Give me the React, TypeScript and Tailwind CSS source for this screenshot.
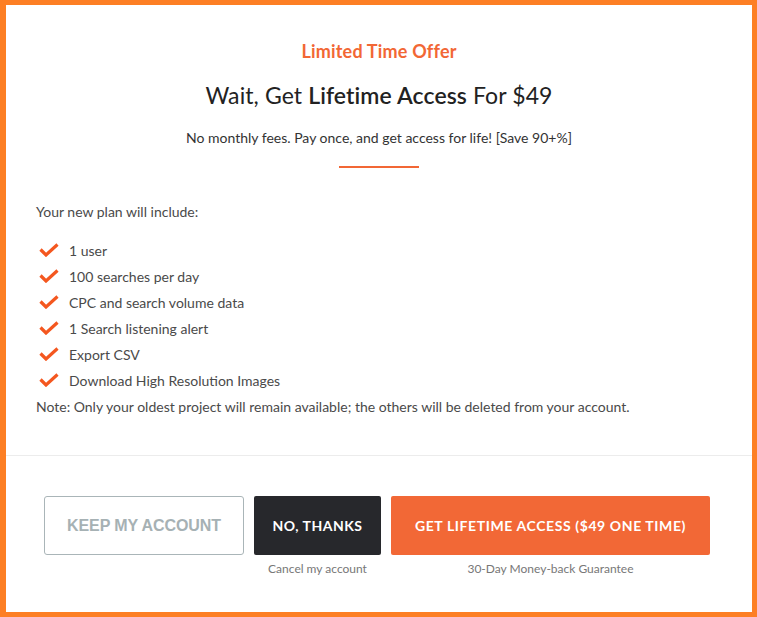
import React from "react";

const items = [
  "1 user",
  "100 searches per day",
  "CPC and search volume data",
  "1 Search listening alert",
  "Export CSV",
  "Download High Resolution Images",
];

function Check() {
  return (
    <svg width="20" height="14" viewBox="0 0 20 14" className="ml-[3px] shrink-0">
      <polyline
        points="1.5,6.5 7,12 18.5,1.5"
        fill="none"
        stroke="#f4571f"
        strokeWidth="3.2"
        strokeLinejoin="miter"
      />
    </svg>
  );
}

export default function App() {
  return (
    <div
      className="w-[757px] h-[617px] bg-white border-solid border-[#fd7f24] border-t-[5px] border-r-[5px] border-b-[5px] border-l-[6px] flex flex-col text-[#4a4a4a]"
      style={{ fontFamily: "Lato, 'Open Sans', sans-serif" }}
    >
      <div className="pt-[36px] flex flex-col items-center">
        <div className="text-[18px] leading-[20px] font-bold text-[#f26735] tracking-[0.2px]">
          Limited Time Offer
        </div>
        <div className="mt-[20px] text-[23px] leading-[28px] text-[#222] tracking-[0.1px]">
          Wait, Get <span className="font-semibold">Lifetime Access</span> For $49
        </div>
        <div className="mt-[20px] text-[14px] leading-[18px] text-[#333]">
          No monthly fees. Pay once, and get access for life! [Save 90+%]
        </div>
        <div className="mt-[19px] w-[80px] h-[2px] bg-[#f26735]" />
      </div>

      <div className="pl-[30px] pr-[30px]">
        <div className="mt-[35px] text-[14px] leading-[18px]">
          Your new plan will include:
        </div>
        <ul className="mt-[16px] flex flex-col">
          {items.map((t) => (
            <li key={t} className="h-[26px] flex items-center gap-[10px] text-[14px]">
              <Check />
              <span>{t}</span>
            </li>
          ))}
        </ul>
        <div className="mt-[1px] text-[14px] leading-[26px]">
          Note: Only your oldest project will remain available; the others will be deleted from your account.
        </div>
      </div>

      <div className="mt-[35px] h-px bg-[#ececec]" />

      <div className="mt-[40px] flex justify-center gap-[10px] pr-[4px]">
        <div className="flex flex-col items-center">
          <div
            className="w-[200px] h-[59px] border border-[#aab5b8] rounded-[3px] flex items-center justify-center text-[16px] font-bold text-[#a6b1b4] tracking-[-0.1px]"
            style={{ fontFamily: "'Liberation Sans', Arial, sans-serif" }}
          >
            KEEP MY ACCOUNT
          </div>
        </div>
        <div className="flex flex-col items-center">
          <div className="w-[127px] h-[59px] bg-[#27282c] rounded-[2px] flex items-center justify-center text-[14px] font-bold text-white tracking-[0.5px]">
            NO, THANKS
          </div>
          <div className="mt-[7px] text-[12px] leading-[14px] text-[#777]">Cancel my account</div>
        </div>
        <div className="flex flex-col items-center">
          <div className="w-[319px] h-[59px] bg-[#f26836] rounded-[2px] flex items-center justify-center text-[14px] font-bold text-white tracking-[0.6px]">
            GET LIFETIME ACCESS ($49 ONE TIME)
          </div>
          <div className="mt-[7px] text-[12px] leading-[14px] text-[#777]">30-Day Money-back Guarantee</div>
        </div>
      </div>
    </div>
  );
}
